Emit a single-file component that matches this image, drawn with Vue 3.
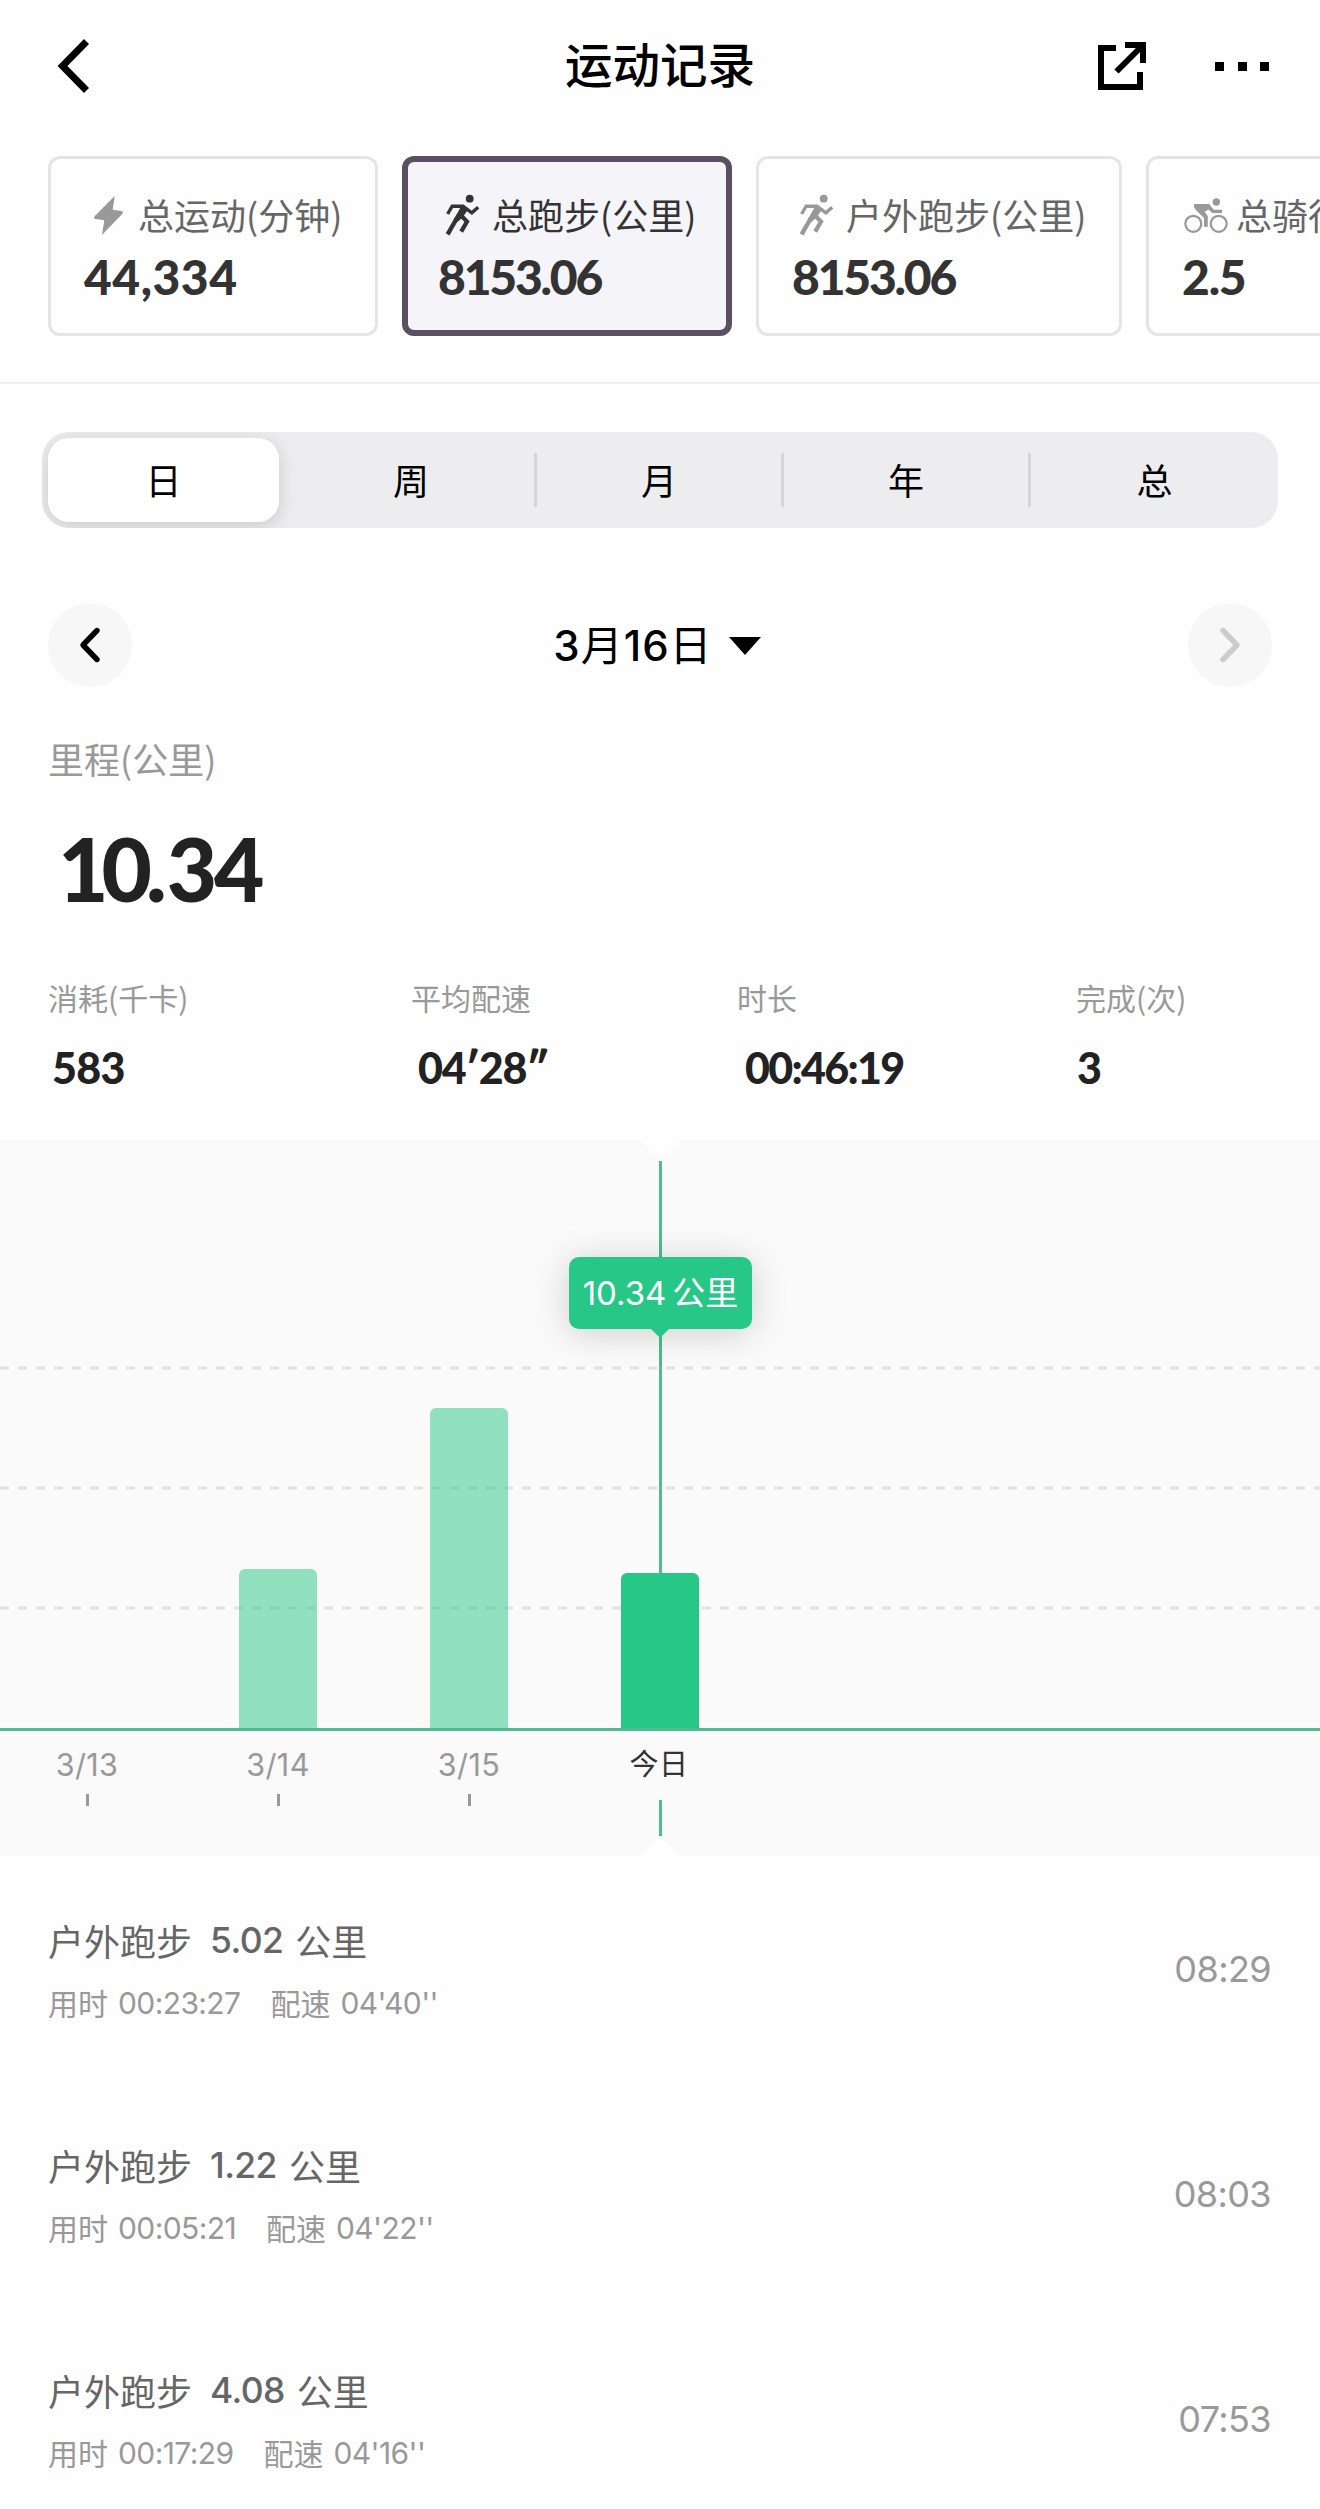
<template>
    <div class="page">
        <header class="top-bar">
            <button class="icon-btn back-btn">
                <svg width="34" height="56" viewBox="0 0 34 56">
                    <path d="M29.5 3.5 L5.5 28 L29.5 52.5" fill="none" stroke="#000" stroke-width="7" />
                </svg>
            </button>
            <h1 class="top-title">运动记录</h1>
            <div class="top-actions">
                <button class="icon-btn">
                    <svg width="48" height="48" viewBox="0 0 48 48" fill="none" stroke="#000" stroke-width="6">
                        <path d="M18 6 H3 V45 H42 V30" />
                        <path d="M27 3 H45 V21" />
                        <path d="M18.5 29.5 L44 4" />
                    </svg>
                </button>
                <button class="icon-btn more-btn">
                    <i></i><i></i><i></i>
                </button>
            </div>
        </header>

        <section class="card-list">
            <div
                v-for="card in cards"
                :key="card.label"
                :class="['card', card.size, { active: activeCard === card.label }]"
                @click="activeCard = card.label">
                <div class="card-label">
                    <svg class="card-icon" viewBox="0 0 48 48">
                        <path v-if="card.icon === 'bolt'" fill="currentColor"
                            d="M30.7 6 L10.4 26.4 Q9.4 28.6 11.6 29.1 L20.3 30.3 L18 45 L38.4 23.8 Q39.6 21.4 37.4 21 L28.7 19.8 Z" />
                        <g v-else-if="card.icon === 'run'" fill="none" stroke="currentColor" stroke-width="3.4">
                            <circle cx="31.7" cy="8.7" r="3.9" fill="currentColor" stroke="none" />
                            <path d="M9.6 24 L14.2 16.2 H25 L33.8 22.8 L40.2 17.2" />
                            <path d="M19.5 16 L26.5 16 L29.4 20.4 L24.6 27.4 L19.5 32 L15.6 29.4 L22 18.5 Z" fill="currentColor" stroke="none" />
                            <path d="M19 28 L9.6 44.4" stroke-width="4.4" />
                            <path d="M22 24.5 L29 31.5 L23.2 41.6" stroke-width="4.2" />
                        </g>
                        <g v-else fill="none" stroke="currentColor">
                            <circle cx="34.3" cy="12" r="3.7" fill="currentColor" stroke="none" />
                            <circle cx="11.3" cy="33.8" r="8" stroke-width="2.2" />
                            <circle cx="36.7" cy="33.8" r="8" stroke-width="2.2" />
                            <path d="M12.2 14 H27 L31.8 19.8 H40 V23 H30.4 L26.4 19.6 L22.6 22 L25.8 26 V36.8 H22 V28 L13.4 19.4 Q11 16.6 12.2 14 Z" fill="currentColor" stroke="none" />
                        </g>
                    </svg>
                    <span>{{ card.label }}</span>
                </div>
                <div :class="['card-value', card.spacing]">{{ card.value }}</div>
            </div>
        </section>

        <nav class="segment">
            <button
                v-for="tab in tabs"
                :key="tab"
                :class="['segment-item', { active: activeTab === tab }]"
                @click="activeTab = tab">
                <span>{{ tab }}</span>
            </button>
        </nav>

        <div class="date-bar">
            <button class="round-btn">
                <svg width="28" height="40" viewBox="0 0 28 40">
                    <path d="M21 5.5 L7 20 L21 34.5" />
                </svg>
            </button>
            <div class="date-text">
                <span>3<b>月</b>16<b>日</b></span>
                <svg width="32" height="18" viewBox="0 0 32 18"><path d="M0 0 H32 L16 18 Z" /></svg>
            </div>
            <button class="round-btn disabled">
                <svg width="28" height="40" viewBox="0 0 28 40">
                    <path d="M7 5.5 L21 20 L7 34.5" />
                </svg>
            </button>
        </div>

        <section class="summary">
            <div class="summary-label">里程(公里)</div>
            <div class="summary-value"><span class="whole">10</span><span class="dot">.</span>34</div>
            <div class="stats">
                <div v-for="stat in stats" :key="stat.label" class="stat">
                    <div class="stat-label">{{ stat.label }}</div>
                    <div :class="['stat-value', stat.type]">{{ stat.value }}</div>
                </div>
            </div>
        </section>

        <section class="chart">
            <svg class="grid" width="1320" height="716" viewBox="0 0 1320 716">
                <path class="dash" d="M0 228 H1320 M0 348 H1320 M0 468 H1320" />
                <path d="M640 0 H681 L660.5 21 Z" fill="#fefefe" />
                <path d="M640 716 H681 L660.5 697 Z" fill="#fefefe" />
                <path class="marker" d="M660.5 21 V440" />
            </svg>
            <div class="columns">
                <div v-for="(day, i) in days" :key="i" :class="['column', { today: day.today }]">
                    <div class="bar-area">
                        <div v-if="day.km" class="bar" :style="{ height: Math.round(day.km * 15.05) + 'px' }"></div>
                    </div>
                    <div class="day-label">{{ day.label }}</div>
                    <div v-if="day.label" class="tick"></div>
                </div>
            </div>
            <div class="axis"></div>
            <div class="tooltip"><span>10.34</span>公里</div>
        </section>

        <section class="records">
            <div v-for="item in records" :key="item.time" class="record">
                <div>
                    <div class="record-title">
                        <span>户外跑步</span><span class="num">{{ item.km }}</span><span>公里</span>
                    </div>
                    <div class="record-sub">
                        <span>用时</span><span class="num">{{ item.duration }}</span>
                        <span class="pace">配速</span><span class="num">{{ item.pace }}</span>
                    </div>
                </div>
                <div class="record-time">{{ item.time }}</div>
            </div>
        </section>
    </div>
</template>

<script setup>
    import { ref } from 'vue';

    const activeCard = ref('总跑步(公里)');
    const activeTab = ref('日');

    const tabs = ['日', '周', '月', '年', '总'];

    const cards = [
        { icon: 'bolt', label: '总运动(分钟)', value: '44,334' },
        { icon: 'run', label: '总跑步(公里)', value: '8153.06', spacing: 'tight' },
        { icon: 'run', label: '户外跑步(公里)', value: '8153.06', size: 'wide', spacing: 'tight' },
        { icon: 'bike', label: '总骑行(公里)', value: '2.5', spacing: 'snug' }
    ];

    const stats = [
        { label: '消耗(千卡)', value: '583' },
        { label: '平均配速', value: '04′28″', type: 'pace' },
        { label: '时长', value: '00:46:19', type: 'time' },
        { label: '完成(次)', value: '3', type: 'count' }
    ];

    const days = [
        { label: '3/13', km: 0 },
        { label: '3/14', km: 10.6 },
        { label: '3/15', km: 21.34 },
        { label: '今日', km: 10.34, today: true },
        {}, {}, {}
    ];

    const records = [
        { km: '5.02', duration: '00:23:27', pace: "04'40''", time: '08:29' },
        { km: '1.22', duration: '00:05:21', pace: "04'22''", time: '08:03' },
        { km: '4.08', duration: '00:17:29', pace: "04'16''", time: '07:53' }
    ];
</script>

<style>
    body {
        margin: 0;
        background: #fefefe;
    }
</style>

<style scoped>
    .page {
        width: 1320px;
        height: 2509px;
        overflow: hidden;
        font-family: "Noto Sans CJK SC", sans-serif;
        color: #000;
    }

    .page * {
        box-sizing: border-box;
    }

    button {
        border: none;
        background: transparent;
        padding: 0;
        font-family: inherit;
        color: inherit;
        cursor: pointer;
    }

    svg {
        display: block;
    }

    /* 顶部栏 */
    .top-bar {
        display: grid;
        grid-template-columns: 1fr auto 1fr;
        align-items: center;
        height: 132px;
        padding: 0 51px 0 57px;
    }

    .back-btn {
        justify-self: start;
    }

    .top-title {
        margin: 0 6px 6px 0;
        font-size: 47.5px;
        line-height: 60px;
        font-weight: 500;
    }

    .top-actions {
        display: flex;
        align-items: center;
        justify-content: flex-end;
        gap: 69px;
    }

    .more-btn {
        display: flex;
        gap: 13.5px;
    }

    .more-btn i {
        width: 9px;
        height: 9px;
        background: #000;
    }

    /* 统计卡片 */
    .card-list {
        display: flex;
        gap: 24px;
        height: 252px;
        padding: 24px 0 0 48px;
        border-bottom: 2px solid #efefef;
        overflow: hidden;
    }

    .card {
        flex: none;
        width: 330px;
        height: 180px;
        padding: 33px 0 0 36px;
        border-radius: 12px;
        box-shadow: inset 0 0 0 3px #e5e5e5;
        color: #999;
    }

    .card.wide {
        width: 366px;
    }

    .card.active {
        background: #f5f5f9;
        box-shadow: inset 0 0 0 6px #5b5061;
        color: #333;
    }

    .card-label {
        display: flex;
        align-items: center;
        gap: 6px;
        height: 50px;
        font-size: 36px;
        line-height: 50px;
        white-space: nowrap;
    }

    .card-label span {
        color: #666;
    }

    .card.active .card-label span {
        color: #333;
    }

    .card-icon {
        width: 48px;
        height: 48px;
    }

    .card-value {
        margin-top: 10px;
        font-family: Lato, sans-serif;
        font-size: 48px;
        line-height: 56px;
        font-weight: 900;
        font-kerning: none;
        letter-spacing: 0.5px;
        color: #333;
    }

    .card-value.tight {
        letter-spacing: -2.2px;
    }

    .card-value.snug {
        letter-spacing: -1.2px;
    }

    /* 周期切换 */
    .segment {
        display: grid;
        grid-template-columns: 246px 249px 247px 247px 247px;
        height: 96px;
        margin: 48px 42px 0;
        border-radius: 27px;
        background: #ededf0;
        overflow: hidden;
    }

    .segment-item {
        display: flex;
        align-items: center;
        font-size: 36px;
        line-height: 50px;
    }

    .segment-item span {
        display: flex;
        align-items: center;
        justify-content: center;
        width: 100%;
        height: 54px;
        padding-bottom: 3px;
        border-right: 3px solid #d5d5d8;
    }

    .segment-item:last-child span,
    .segment-item.active span {
        border-right: none;
    }

    .segment-item.active {
        padding: 6px 9px 6px 6px;
    }

    .segment-item.active span {
        height: 84px;
        border-radius: 21px;
        background: #fff;
        box-shadow: 0 4px 18px rgba(0, 0, 0, 0.15);
    }

    /* 日期 */
    .date-bar {
        display: flex;
        align-items: center;
        justify-content: space-between;
        height: 84px;
        margin: 75px 48px 0;
    }

    .round-btn {
        display: flex;
        align-items: center;
        justify-content: center;
        width: 84px;
        height: 84px;
        border-radius: 50%;
        background: #f7f7f7;
    }

    .round-btn path {
        fill: none;
        stroke: #000;
        stroke-width: 5.4;
        stroke-linecap: round;
        stroke-linejoin: round;
    }

    .round-btn.disabled path {
        stroke: #ccc;
    }

    .date-text {
        display: flex;
        align-items: center;
        gap: 16px;
        padding: 2px 6px 0 0;
        font-family: Inter, "Noto Sans CJK SC", sans-serif;
        font-size: 42px;
        line-height: 60px;
        font-weight: 500;
        letter-spacing: 1px;
    }

    .date-text b {
        font-size: 42px;
        font-weight: 400;
    }

    /* 汇总 */
    .summary {
        height: 453px;
        padding: 46px 48px 0;
        color: #999;
    }

    .summary-label {
        font-size: 36px;
        line-height: 50px;
    }

    .summary-value {
        margin-top: 36px;
        padding-left: 10px;
        font-family: Lato, sans-serif;
        font-size: 87px;
        line-height: 100px;
        font-weight: 900;
        font-kerning: none;
        letter-spacing: -3px;
        color: #222;
    }

    .summary-value .whole {
        letter-spacing: -7px;
    }

    .summary-value .dot {
        letter-spacing: 0;
        padding-left: 1px;
    }

    .stats {
        display: grid;
        grid-template-columns: 363px 326px 339px 1fr;
        margin-top: 58px;
    }

    .stat-label {
        font-size: 30px;
        line-height: 40px;
    }

    .stat-value {
        margin-top: 24px;
        padding-left: 4px;
        font-family: Lato, sans-serif;
        font-size: 43px;
        line-height: 54px;
        font-weight: 900;
        letter-spacing: -0.7px;
        color: #222;
    }

    .stat-value.pace {
        padding-left: 7px;
        letter-spacing: -1.3px;
    }

    .stat-value.time {
        padding-left: 8px;
        letter-spacing: -1.7px;
    }

    .stat-value.count {
        padding-left: 1px;
    }

    /* 图表 */
    .chart {
        position: relative;
        height: 716px;
        background: #fafafa;
        overflow: hidden;
    }

    .grid {
        position: absolute;
        left: 0;
        top: 0;
    }

    .dash {
        stroke: #e2e2e2;
        stroke-width: 3;
        stroke-dasharray: 9 9;
    }

    .marker {
        stroke: #4fbd8d;
        stroke-width: 3;
    }

    .columns {
        position: relative;
        display: flex;
        justify-content: center;
    }

    .column {
        display: flex;
        flex-direction: column;
        align-items: center;
        flex: none;
        width: 191px;
    }

    .bar-area {
        display: flex;
        align-items: flex-end;
        height: 589px;
    }

    .bar {
        width: 78px;
        border-radius: 6px 6px 0 0;
        background: rgba(39, 200, 135, 0.5);
    }

    .today .bar {
        background: #27c887;
    }

    .axis {
        position: absolute;
        left: 0;
        right: 0;
        top: 588px;
        height: 3px;
        background: #4fbd8d;
    }

    .day-label {
        height: 40px;
        margin-top: 16px;
        font-family: Inter, "Noto Sans CJK SC", sans-serif;
        font-size: 30.5px;
        line-height: 40px;
        letter-spacing: 0.4px;
        color: #999;
    }

    .today .day-label {
        font-size: 29px;
        padding-right: 2px;
        color: #333;
    }

    .tick {
        width: 3px;
        height: 12px;
        margin-top: 9px;
        background: #999;
    }

    .today .tick {
        height: 36px;
        margin-top: 15px;
        background: #4fbd8d;
    }

    .tooltip {
        position: absolute;
        left: 569px;
        top: 117px;
        display: flex;
        align-items: center;
        justify-content: center;
        gap: 6px;
        width: 183px;
        height: 72px;
        border-radius: 10px;
        background: #27c887;
        box-shadow: 0 4px 36px rgba(0, 0, 0, 0.18);
        font-family: Inter, "Noto Sans CJK SC", sans-serif;
        font-size: 33px;
        line-height: 40px;
        color: #fff;
    }

    .tooltip::after {
        content: "";
        position: absolute;
        left: 82px;
        top: 72px;
        border: 9px solid transparent;
        border-top-color: #27c887;
        border-bottom: none;
    }

    /* 记录列表 */
    .records {
        padding: 57px 49px 0 48px;
    }

    .record {
        display: flex;
        align-items: flex-start;
        justify-content: space-between;
        height: 225px;
    }

    .num {
        font-family: Inter, sans-serif;
    }

    .record-title {
        display: flex;
        height: 54px;
        font-size: 36px;
        line-height: 54px;
        color: #666;
        white-space: nowrap;
    }

    .record-title .num {
        margin: 0 12px 0 18px;
        padding-top: 1px;
        font-size: 35.5px;
        font-weight: 500;
        letter-spacing: -0.6px;
    }

    .record-sub {
        display: flex;
        margin-top: 15px;
        font-size: 30px;
        line-height: 40px;
        color: #999;
    }

    .record-sub .num {
        margin-left: 10px;
        padding-top: 1px;
        letter-spacing: -0.6px;
    }

    .record-sub .pace {
        margin-left: 30px;
    }

    .record-time {
        margin-top: 34px;
        font-family: Inter, sans-serif;
        font-size: 36px;
        line-height: 44px;
        letter-spacing: -0.6px;
        color: #999;
    }
</style>
